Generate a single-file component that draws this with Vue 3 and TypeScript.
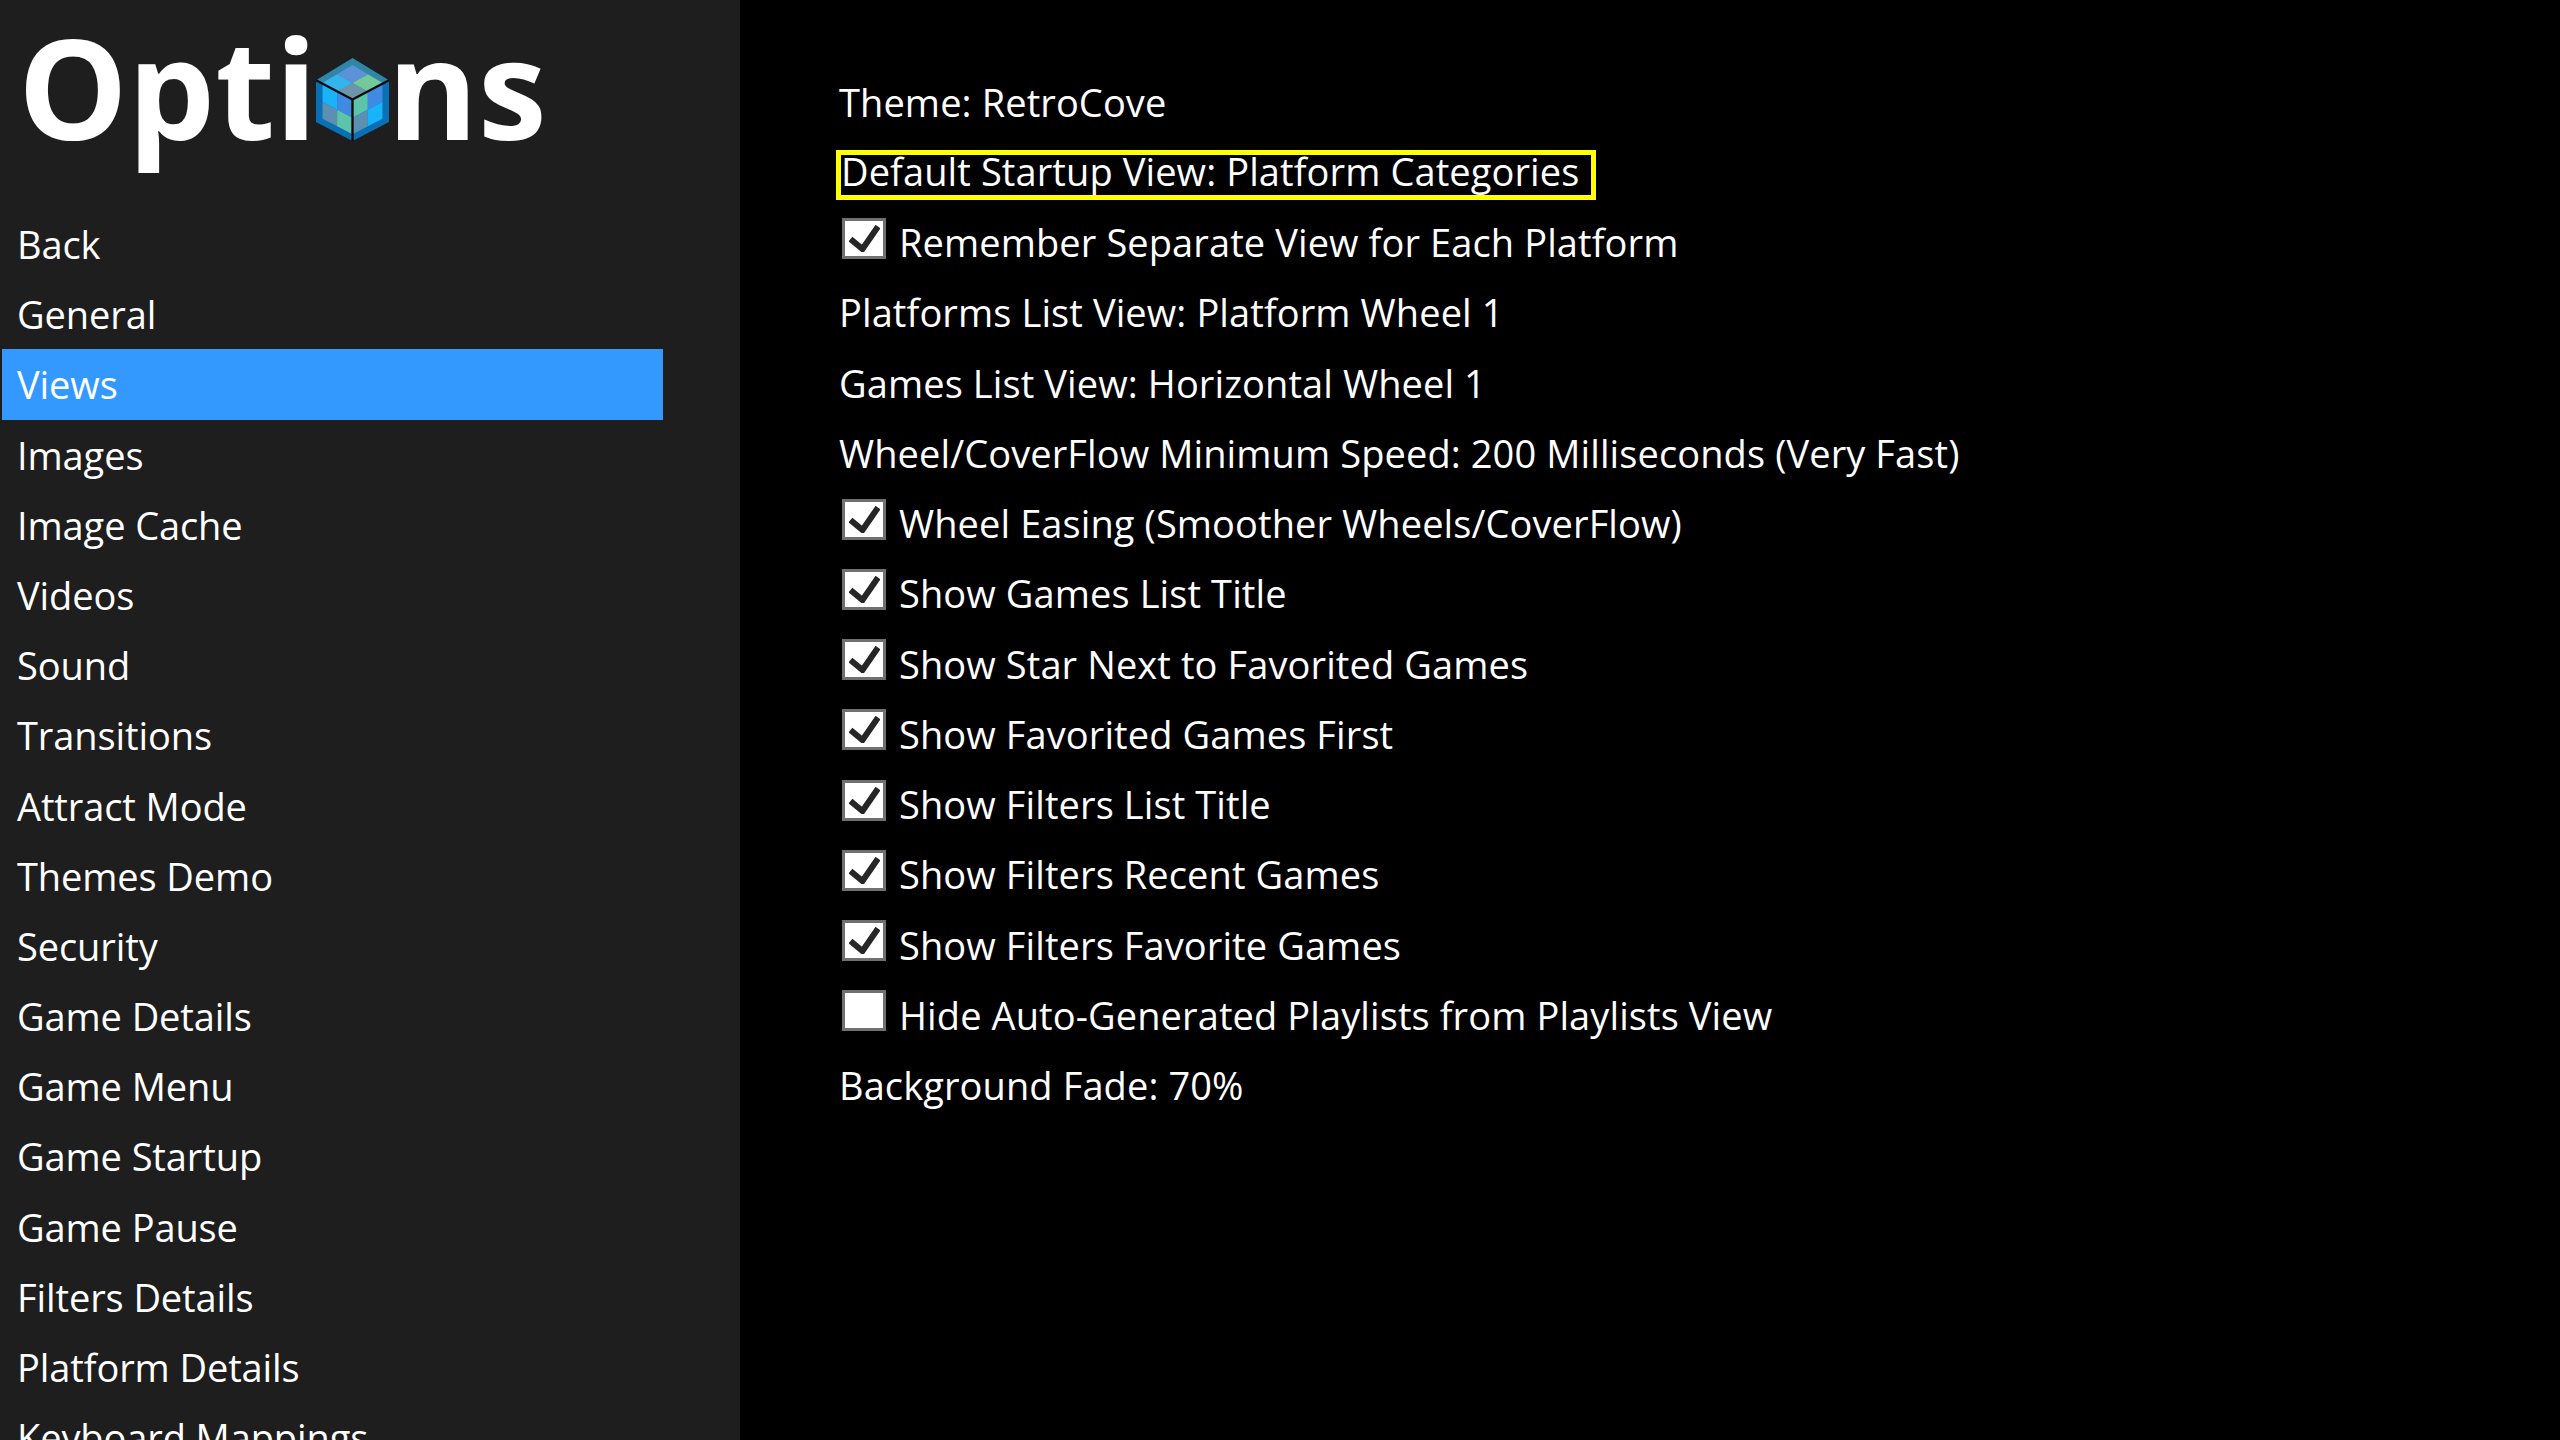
<script setup lang="ts">
type P = [number, number];
const lerp = (a: P, b: P, t: number): P => [a[0] + (b[0] - a[0]) * t, a[1] + (b[1] - a[1]) * t];
const quad = (a: P, b: P, c: P, d: P, u: number, v: number): P => lerp(lerp(a, b, u), lerp(d, c, u), v);
const T: P = [110, 0], L: P = [0, 67], R: P = [220, 67], B: P = [110, 250], C: P = [110, 125], LB: P = [0, 193], RB: P = [220, 193];
const poly = (a: P, b: P, c: P, d: P, u0: number, u1: number, v0: number, v1: number) =>
  [quad(a, b, c, d, u0, v0), quad(a, b, c, d, u1, v0), quad(a, b, c, d, u1, v1), quad(a, b, c, d, u0, v1)]
    .map((p) => p.join(",")).join(" ");
const pts = (...p: P[]) => p.map((x) => x.join(",")).join(" ");
const cells = [
  { f: "#18b4fb", p: poly(L, C, B, LB, 0.18, 0.58, 0.02, 0.44) },
  { f: "#3f8ae2", p: poly(L, C, B, LB, 0.58, 1, 0.02, 0.44) },
  { f: "#5c8fb0", p: poly(L, C, B, LB, 0.18, 0.58, 0.44, 0.84) },
  { f: "#5cc4a8", p: poly(L, C, B, LB, 0.58, 1, 0.44, 0.84) },
  { f: "#5cc4a8", p: poly(C, R, RB, B, 0, 0.42, 0.02, 0.44) },
  { f: "#3f8ae2", p: poly(C, R, RB, B, 0.42, 0.82, 0.02, 0.44) },
  { f: "#5c8fb0", p: poly(C, R, RB, B, 0, 0.42, 0.44, 0.84) },
  { f: "#18b4fb", p: poly(C, R, RB, B, 0.42, 0.82, 0.44, 0.84) },
  { f: "#6b95a8", p: poly(C, R, T, L, 0, 0.42, 0, 0.42) },
  { f: "#74c89a", p: poly(C, R, T, L, 0.42, 0.84, 0, 0.42) },
  { f: "#33b4ee", p: poly(C, R, T, L, 0, 0.42, 0.42, 0.84) },
  { f: "#5b92d8", p: poly(C, R, T, L, 0.42, 0.84, 0.42, 0.84) },
];
const topFace = pts(T, R, C, L);
const leftFace = pts(L, C, B, LB);
const rightFace = pts(C, R, RB, B);

const menu = ["Back", "General", "Views", "Images", "Image Cache", "Videos", "Sound", "Transitions", "Attract Mode", "Themes Demo", "Security", "Game Details", "Game Menu", "Game Startup", "Game Pause", "Filters Details", "Platform Details", "Keyboard Mappings"];

interface Opt { label: string; check?: boolean; focus?: boolean }
const options: Opt[] = [
  { label: "Theme: RetroCove" },
  { label: "Default Startup View: Platform Categories", focus: true },
  { label: "Remember Separate View for Each Platform", check: true },
  { label: "Platforms List View: Platform Wheel 1" },
  { label: "Games List View: Horizontal Wheel 1" },
  { label: "Wheel/CoverFlow Minimum Speed: 200 Milliseconds (Very Fast)" },
  { label: "Wheel Easing (Smoother Wheels/CoverFlow)", check: true },
  { label: "Show Games List Title", check: true },
  { label: "Show Star Next to Favorited Games", check: true },
  { label: "Show Favorited Games First", check: true },
  { label: "Show Filters List Title", check: true },
  { label: "Show Filters Recent Games", check: true },
  { label: "Show Filters Favorite Games", check: true },
  { label: "Hide Auto-Generated Playlists from Playlists View", check: false },
  { label: "Background Fade: 70%" },
];
</script>

<template>
  <div class="screen">
    <aside class="side">
      <h1 class="title">Opti<svg class="cube" viewBox="0 0 220 250" aria-hidden="true">
          <polygon :points="topFace" fill="#2f86a8" />
          <polygon :points="leftFace" fill="#0a70b6" />
          <polygon :points="rightFace" fill="#0a70b6" />
          <polygon v-for="(c, i) in cells" :key="i" :points="c.p" :fill="c.f" />
          <path d="M0 67L110 125L220 67" fill="none" stroke="#0a0a0a" stroke-width="7" />
          <path d="M110 125V250" fill="none" stroke="#0a0a0a" stroke-width="7" />
        </svg>ns</h1>
      <nav class="menu">
        <div v-for="m in menu" :key="m" class="item" :class="{ active: m === 'Views' }">{{ m }}</div>
      </nav>
    </aside>
    <main class="main">
      <div v-for="o in options" :key="o.label" class="row">
        <template v-if="o.check !== undefined">
          <span class="box">
            <svg v-if="o.check" class="tick" viewBox="0 0 31 27" aria-hidden="true">
              <path d="M1.5 14L13.5 24L29 1.5" fill="none" stroke="#262626" stroke-width="6" />
            </svg>
          </span>
          <span class="chk-label">{{ o.label }}</span>
        </template>
        <span v-else-if="o.focus" class="focus">{{ o.label }}</span>
        <span v-else>{{ o.label }}</span>
      </div>
    </main>
  </div>
</template>

<style scoped>
.screen {
  display: flex;
  width: 2560px;
  height: 1440px;
  overflow: hidden;
  background: #000;
  color: #fff;
  font-family: "Open Sans", "Noto Sans", sans-serif;
  font-size: 38px;
  letter-spacing: 0.1px;
}
.side {
  width: 740px;
  flex: none;
  background: #1e1e1e;
  overflow: hidden;
}
.title {
  height: 209px;
  margin: 0;
  padding-left: 18px;
  box-sizing: border-box;
  font-size: 138px;
  font-weight: 700;
  line-height: 172px;
  letter-spacing: 0;
  white-space: nowrap;
}
.cube {
  width: 73px;
  height: 83px;
  margin: 0 -2px 0 -1px;
  vertical-align: -1px;
}
.item {
  height: 70.2px;
  line-height: 70.2px;
  padding-left: 15px;
  margin-left: 2px;
  width: 661px;
  box-sizing: border-box;
  white-space: nowrap;
  letter-spacing: -0.1px;
}
.active {
  background: #3399ff;
}
.main {
  flex: 1;
  padding: 66.5px 0 0 99px;
}
.row {
  height: 70.25px;
  display: flex;
  align-items: center;
  white-space: nowrap;
}
.focus {
  margin: 7px 0 0 -3px;
  padding-right: 12px;
  height: 50px;
  line-height: 33px;
  box-sizing: border-box;
  border: 5px solid #ff0;
}
.box {
  width: 44px;
  height: 41px;
  margin: -8px 13px 0 3px;
  box-sizing: border-box;
  border: 3px solid #707070;
  background: #fff;
  display: flex;
  align-items: center;
  justify-content: center;
  flex: none;
}
.tick {
  width: 31px;
  height: 27px;
}
</style>
